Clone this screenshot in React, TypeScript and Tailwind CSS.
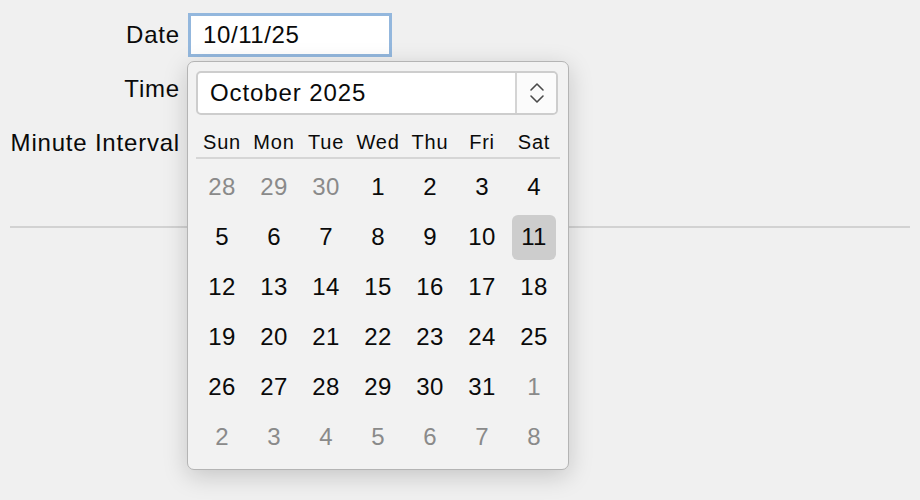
import { useState } from "react";

const WEEKDAYS = ["Sun", "Mon", "Tue", "Wed", "Thu", "Fri", "Sat"];

type Day = { n: number; muted: boolean };

function buildMonth(): Day[] {
  const days: Day[] = [];
  for (const n of [28, 29, 30]) days.push({ n, muted: true });
  for (let n = 1; n <= 31; n++) days.push({ n, muted: false });
  for (let n = 1; n <= 8; n++) days.push({ n, muted: true });
  return days;
}

function Stepper() {
  return (
    <svg width="16" height="26" viewBox="0 0 16 26" fill="none" stroke="#4a4a4a" strokeWidth="1.6" strokeLinecap="round" strokeLinejoin="round">
      <path d="M2 10 L8 4 L14 10" />
      <path d="M2 16 L8 22 L14 16" />
    </svg>
  );
}

export default function App() {
  const [selected] = useState(11);
  const days = buildMonth();

  return (
    <div
      className="relative h-[500px] w-[920px] overflow-hidden bg-[#f0f0f0] text-[#0a0a0a]"
      style={{ fontFamily: '"Liberation Sans", Arial, sans-serif' }}
    >
      <div className="pt-[8px]">
        <div className="flex h-[54px] items-center">
          <div className="w-[180px] text-right text-[24px] tracking-[0.8px]">Date</div>
          <div className="ml-[8px] flex h-[44px] w-[204px] items-center border-[3px] border-[#93b7dd] bg-white pl-[12px] text-[24px] tracking-[0.6px]">
            10/11/25
          </div>
        </div>
        <div className="flex h-[54px] items-center">
          <div className="w-[180px] text-right text-[24px] tracking-[0.8px]">Time</div>
        </div>
        <div className="flex h-[54px] items-center">
          <div className="w-[180px] text-right text-[24px] tracking-[0.8px]">Minute Interval</div>
        </div>
        <div className="mx-[10px] mt-[56px] h-[2px] bg-[#d2d2d2]" />
      </div>

      {/* calendar popover */}
      <div className="absolute left-[187px] top-[61px] h-[409px] w-[382px] rounded-[7px] border border-[#b4b4b4] bg-[#f2f2f2] px-[8px] pt-[9px] shadow-[0_6px_24px_rgba(0,0,0,0.18)]">
        <div className="flex h-[44px] w-[362px] items-stretch rounded-[5px] border-2 border-[#cdcdcd] bg-white">
          <div className="flex flex-1 items-center pl-[12px] text-[24px] tracking-[0.9px]">October 2025</div>
          <div className="flex w-[41px] items-center justify-center rounded-r-[4px] border-l-2 border-[#d4d4d4] bg-[#fbfbfb]">
            <Stepper />
          </div>
        </div>

        <div className="mt-[12px] grid h-[30px] w-[364px] grid-cols-7 items-center text-center text-[20px] tracking-[0.8px]">
          {WEEKDAYS.map((d) => (
            <div key={d}>{d}</div>
          ))}
        </div>
        <div className="h-[2px] w-[364px] bg-[#d6d6d6]" />

        <div className="mt-[3px] grid w-[364px] grid-cols-7 text-[24px] tracking-[0.4px]">
          {days.map((d, i) => {
            const isSel = !d.muted && d.n === selected;
            return (
              <div key={i} className="flex h-[50px] items-center justify-center">
                <div
                  className={
                    isSel
                      ? "flex h-[45px] w-[44px] items-center justify-center rounded-[6px] bg-[#cdcdcd]"
                      : d.muted
                        ? "text-[#8a8a8a]"
                        : ""
                  }
                >
                  {d.n}
                </div>
              </div>
            );
          })}
        </div>
      </div>
    </div>
  );
}
